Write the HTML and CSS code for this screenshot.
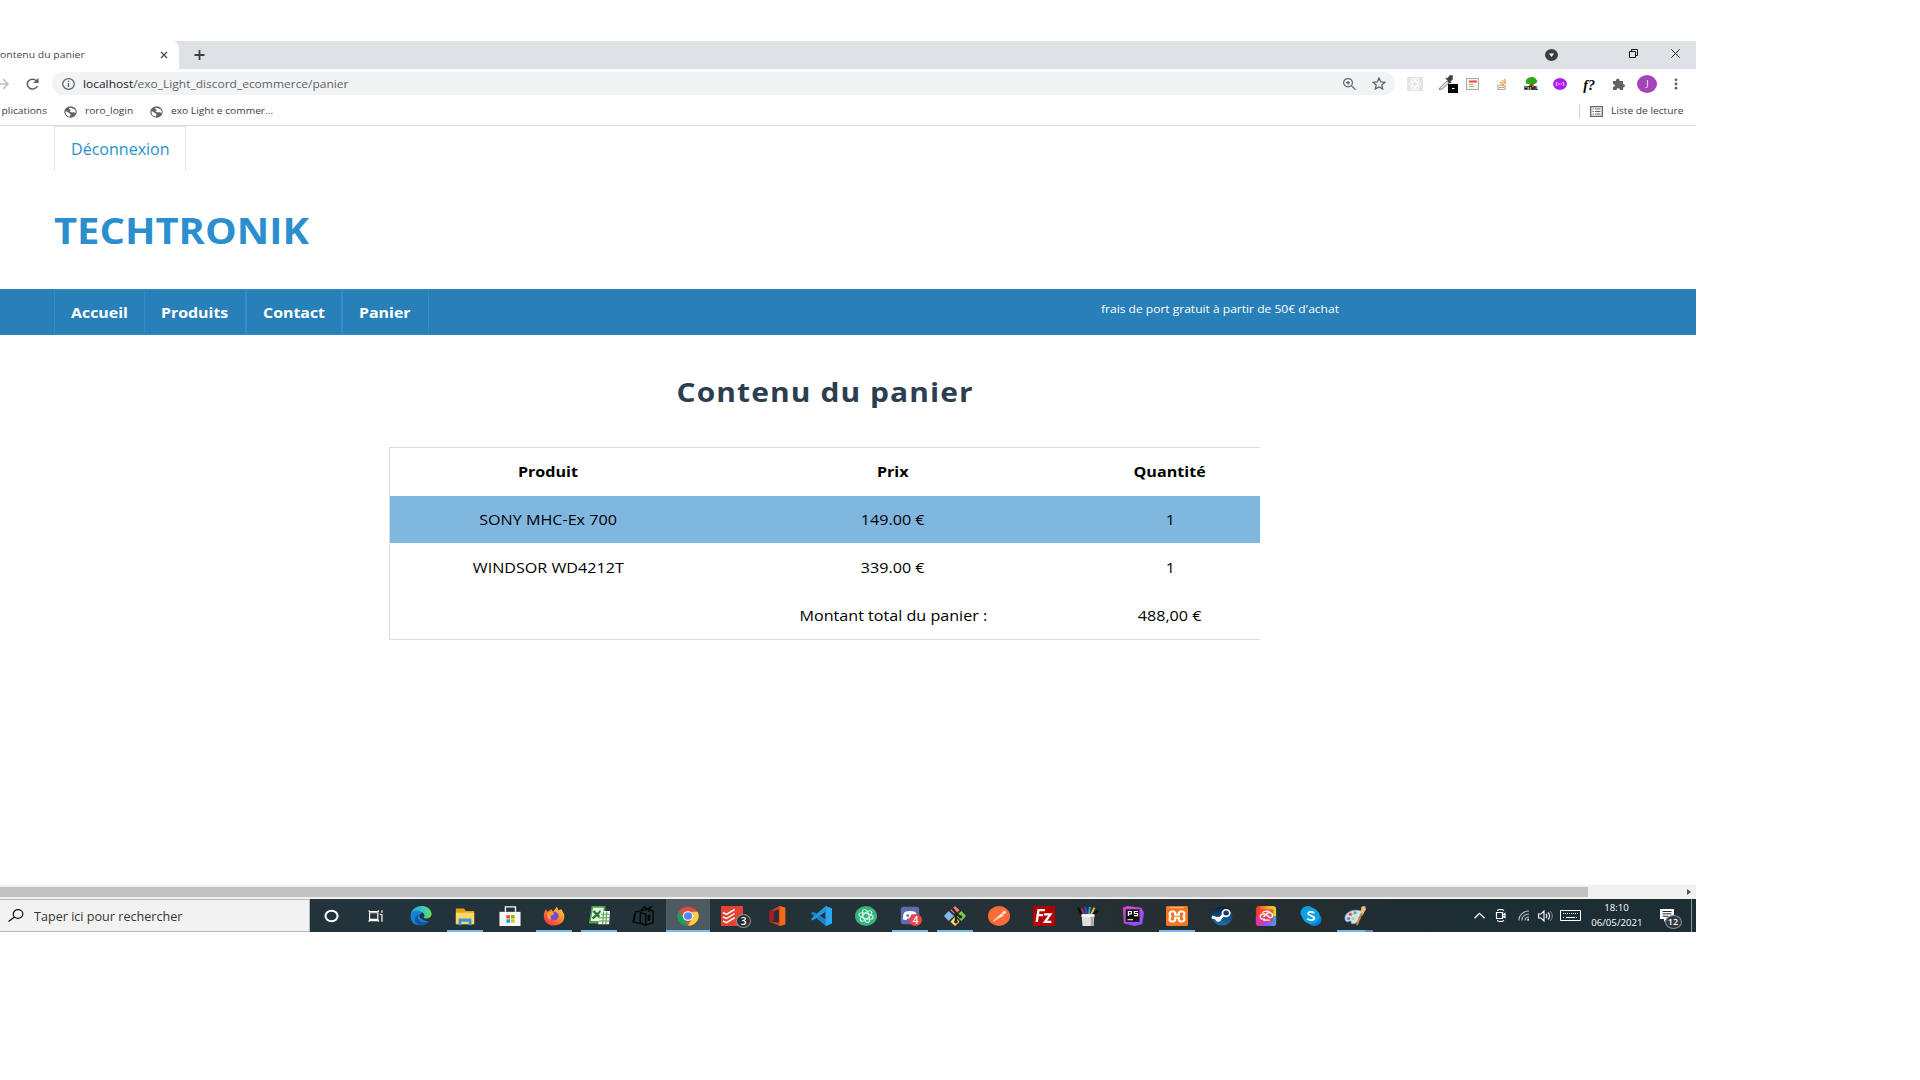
FILE: index.html
```html
<!DOCTYPE html>
<html lang="fr">
<head>
<meta charset="utf-8">
<title>Contenu du panier</title>
<link rel="stylesheet" href="styles.css">
</head>
<body>
<svg class="defs" width="0" height="0">
  <defs>
    <linearGradient id="edge" x1="0" y1="0" x2="1" y2="0"><stop offset="0" stop-color="#2aa6dc"/><stop offset=".6" stop-color="#37c8c0"/><stop offset="1" stop-color="#6be04a"/></linearGradient>
    <linearGradient id="fire" x1="1" y1="0" x2="0" y2="1"><stop offset="0" stop-color="#ffe040"/><stop offset=".5" stop-color="#ff7a28"/><stop offset="1" stop-color="#f0206c"/></linearGradient>
    <linearGradient id="cc" x1="0" y1="0" x2="1" y2="1"><stop offset="0" stop-color="#f03030"/><stop offset=".3" stop-color="#ff9a20"/><stop offset=".5" stop-color="#f040a0"/><stop offset=".75" stop-color="#5a70f0"/><stop offset="1" stop-color="#30d070"/></linearGradient>
    <linearGradient id="ccTop" x1="0" y1="0" x2="1" y2="0"><stop offset="0" stop-color="#f02a2a"/><stop offset=".5" stop-color="#ff9a20"/><stop offset="1" stop-color="#d8e02a"/></linearGradient>
    <linearGradient id="ccLow" x1="0" y1="0" x2="1" y2="0"><stop offset="0" stop-color="#f0309a"/><stop offset=".5" stop-color="#9a50f0"/><stop offset="1" stop-color="#30a8f0"/></linearGradient>
    <linearGradient id="ps" x1="0" y1="0" x2="1" y2="1"><stop offset="0" stop-color="#e548c8"/><stop offset="1" stop-color="#7c50ff"/></linearGradient>
    <linearGradient id="steam" x1="0" y1="0" x2="0" y2="1"><stop offset="0" stop-color="#0f1c3c"/><stop offset="1" stop-color="#1775b0"/></linearGradient>
    <symbol id="globe" viewBox="0 0 24 24" preserveAspectRatio="none"><circle cx="12" cy="12" r="11.500" fill="#5f6368"/><path d="M3 10l5 3 4 3-1 5C5 21 2 16 3 10zM11 3l-2 3 4 2-3 3 5 2 4-1 1 3 2-3-2-5-4-2z" fill="#fff"/></symbol>
  </defs>
</svg>
<div class="screen">
  <header class="chrome">
    <div class="tabstrip">
      <div class="tab"><span class="t tab-title">ontenu du panier</span>
        <svg class="tab-close" viewBox="0 0 8 8"><path d="M1 1l6 6M7 1l-6 6" stroke="#45494d" stroke-width="1.300"/></svg></div>
      <svg class="tab-new" viewBox="0 0 10 10"><path d="M5 0v10M0 5h10" stroke="#3c4043" stroke-width="1.800"/></svg>
      <svg class="win-more" viewBox="0 0 13 12"><ellipse cx="6.500" cy="6" rx="6.500" ry="6" fill="#3c4043"/><path d="M4 4.500h5L6.500 8z" fill="#fff"/></svg>
      <svg class="win-restore" viewBox="0 0 9 9"><path d="M.5 2.500h6v6h-6zM2.500 2.500v-2h6v6h-2" fill="none" stroke="#111"/></svg>
      <svg class="win-close" viewBox="0 0 9 9"><path d="M.3.3l8.400 8.400M8.700.3L.3 8.700" stroke="#222" stroke-width="1"/></svg>
    </div>
    <div class="toolbar">
      <svg class="forward" viewBox="0 0 10 12"><path d="M0 6h8M3 1l5 5-5 5" fill="none" stroke="#bcbec1" stroke-width="1.600"/></svg>
      <svg class="reload" viewBox="0 0 13 12"><path d="M11 3.400A5.300 4.900 0 1 0 11.500 8" fill="none" stroke="#5f6368" stroke-width="1.600"/><path d="M12.600 0v5H7.200z" fill="#5f6368"/></svg>
      <div class="omnibox">
        <svg class="info" viewBox="0 0 13 12"><ellipse cx="6.500" cy="6" rx="5.800" ry="5.300" fill="none" stroke="#5f6368" stroke-width="1.300"/><path d="M6.500 5v4M6.500 2.700v1.400" stroke="#5f6368" stroke-width="1.400"/></svg>
        <span class="t url"><b>localhost</b>/exo_Light_discord_ecommerce/panier</span>
        <svg class="zoomer" viewBox="0 0 13 12"><ellipse cx="5" cy="4.700" rx="4.400" ry="4.100" fill="none" stroke="#5f6368" stroke-width="1.200"/><path d="M8.300 7.600l4.200 4M3 4.700h4M5 2.900v3.600" stroke="#5f6368" stroke-width="1.300"/></svg>
        <svg class="star" viewBox="0 0 14 13"><path d="M7 1l1.700 3.800 4.300.4-3.200 2.700.9 4.100L7 9.900 3.300 12l.9-4.100L1 5.200l4.300-.4z" fill="none" stroke="#5f6368" stroke-width="1.300"/></svg>
      </div>
      <div class="extensions">
        <div><svg viewBox="0 0 16 14" width="16" height="14"><path d="M0 0h16v14H0z" fill="#e4e4e4"/><g fill="none" stroke="#fff"><ellipse cx="8" cy="7" rx="6" ry="2.300"/><ellipse cx="8" cy="7" rx="6" ry="2.300" transform="rotate(60 8 7)"/><ellipse cx="8" cy="7" rx="6" ry="2.300" transform="rotate(120 8 7)"/></g></svg></div>
        <div class="dropper"><svg viewBox="0 0 20 18" width="20" height="18"><path d="M2 12.500L9 6l2 2-7 6-3 .5z" fill="#ddd" stroke="#888"/><path d="M8 3l5 5M10 4l2-3h2v3l-3 3z" fill="#444" stroke="#444" stroke-width="1.600"/><path d="M10 9h10v9H10z"/><path d="M14 13.500h2.500" stroke="#fff"/></svg></div>
        <div><svg viewBox="0 0 13 12" width="13" height="12"><path d="M.5.5h12v11H.5z" fill="#f4f4f4" stroke="#aaa"/><path d="M3 2.500h8v2H3z" fill="#f44"/><path d="M3 6.500h4M3 8.500h5" stroke="#8c6"/></svg></div>
        <div><svg viewBox="0 0 10 12" width="10" height="12"><path d="M1 7v4.500h7V7M2 9.500h5" fill="none" stroke="#aaa" stroke-width="1.200"/><path d="M2 6.500l5 1.500M3 4l4 3M5 2l3 4M7.500 1l1 4" stroke="#f19a42" stroke-width="1.200"/></svg></div>
        <div><svg viewBox="0 0 14 13" width="14" height="13"><path d="M6 5h3l1 5H5z" fill="#984b16"/><path d="M3 7a3 3 0 0 1 0-5c1-2 7-3 9 0 2 2 1 4-1 5z" fill="#32a61c"/><path d="M0 9h14v4H0z" fill="#ddd"/><text x="0" y="12.900" class="ext-html" textLength="14">HTML</text></svg></div>
        <div><svg viewBox="0 0 13 12" width="14" height="12" preserveAspectRatio="none"><ellipse cx="6.500" cy="6" rx="6.500" ry="6" fill="#ad1eef"/><path d="M4 4L2.500 6 4 8M9 4l1.500 2L9 8M4.500 6h4" fill="none" stroke="#f0c4ff" stroke-dasharray="2 .6"/></svg></div>
        <div><span class="ext-f">f?</span></div>
        <div><svg viewBox="0 0 13 12" width="13" height="12"><path d="M1 3h3c-.4-3 4-3 3.600 0H11v3c2.500 0 2.500 3.500 0 3.500V12H8c0-2.500-3.500-2.500-3.500 0H1V9c2.500 0 2.500-3 0-3z" fill="#5f6368"/></svg></div>
        <div><span class="avatar">J</span></div>
        <div><svg viewBox="0 0 4 12" width="4" height="12" fill="#5f6368"><circle cx="2" cy="1.800" r="1.400"/><circle cx="2" cy="6" r="1.400"/><circle cx="2" cy="10.200" r="1.400"/></svg></div>
      </div>
    </div>
    <div class="bookmarks">
      <span class="t bm bm-apps">plications</span>
      <svg class="bm-globe g1"><use href="#globe"/></svg>
      <span class="t bm bm-roro">roro_login</span>
      <svg class="bm-globe g2"><use href="#globe"/></svg>
      <span class="t bm bm-exo">exo Light e commer...</span>
      <div class="reading">
        <svg viewBox="0 0 13 11" width="13" height="11"><path d="M.7.7h11.600v9.600H.7z" fill="#fff" stroke="#5f6368" stroke-width="1.300"/><path d="M2.500 3h1.400M2.500 5.500h1.400M2.500 8h1.400M5 3h5.500M5 5.500h5.500M5 8h5.500" stroke="#5f6368" stroke-width="1.200"/></svg>
        <span class="t bm">Liste de lecture</span>
      </div>
    </div>
  </header>

  <main class="page">
    <a class="logout"><span class="t logout-text">Déconnexion</span></a>
    <div class="brand"><span class="t brand-text">TECHTRONIK</span></div>
    <nav class="nav">
      <a class="n1"><span class="t nav-text">Accueil</span></a>
      <a class="n2"><span class="t nav-text">Produits</span></a>
      <a class="n3"><span class="t nav-text">Contact</span></a>
      <a class="n4"><span class="t nav-text">Panier</span></a>
      <span class="t shipping">frais de port gratuit à partir de 50€ d'achat</span>
    </nav>
    <h1><span class="t h1-text">Contenu du panier</span></h1>
    <div class="cart">
      <div class="row head"><span class="t">Produit</span><span class="t">Prix</span><span class="t">Quantité</span></div>
      <div class="row stripe"><span class="t">SONY MHC-Ex 700</span><span class="t">149.00 €</span><span class="t">1</span></div>
      <div class="row"><span class="t">WINDSOR WD4212T</span><span class="t">339.00 €</span><span class="t">1</span></div>
      <div class="row"><span></span><span class="t">Montant total du panier :</span><span class="t">488,00 €</span></div>
    </div>
  </main>

  <div class="scrollbar"><div class="thumb"></div><svg viewBox="0 0 4 6" width="4" height="6"><path d="M0 0l4 3-4 3z" fill="#505050"/></svg></div>

  <footer class="taskbar">
    <div class="search">
      <svg viewBox="0 0 16 13" width="16" height="13"><ellipse cx="10" cy="5" rx="4.800" ry="4.300" fill="none" stroke="#111" stroke-width="1.200"/><path d="M6.500 8L.5 12.500" stroke="#111" stroke-width="1.300"/></svg>
      <span class="t search-text">Taper ici pour rechercher</span>
    </div>
    <div class="apps">
      <div class="app"><svg viewBox="0 0 24 24" preserveAspectRatio="none"><ellipse cx="11.500" cy="12" rx="6.600" ry="6.300" fill="none" stroke="#fff" stroke-width="2.200"/></svg></div>
      <div class="app"><svg viewBox="0 0 24 24" preserveAspectRatio="none"><path d="M5 8h9v8H5zM4.500 5v1.500h10V5M4.500 19v-1.500h10V19M18.500 5v3M18.500 10v9M16 10h2" fill="none" stroke="#fff" stroke-width="1.300"/></svg></div>
      <div class="app"><svg viewBox="0 0 24 24" preserveAspectRatio="none"><path d="M1 10C3-3 22-3 23.500 9c.5 6-6 7-9 5 3-3 0-7-4-7C5 7 2 10 1 10z" fill="url(#edge)"/><path d="M.5 11C3 4 12 4 13.500 9c-5 0-5 8 7 9.500C14 26 0 25 .5 11z" fill="#1583d4"/><path d="M10 10c-4 5 1 12 10.500 8.500-3 5-11 6.500-14 2C4 17 6 11 10 10z" fill="#1156a6"/></svg></div>
      <div class="app open"><svg viewBox="0 0 24 24" preserveAspectRatio="none"><path d="M2 3h9l2 3h9v15H2z" fill="#e5a312"/><path d="M2 8h20v14H2z" fill="#ffd766"/><path d="M5 23v-8h14v8h-3v-4H8v4z" fill="#3c97d9"/></svg></div>
      <div class="app"><svg viewBox="0 0 24 24" preserveAspectRatio="none"><path d="M7 7V1h11v6" fill="none" stroke="#fff" stroke-width="1.500"/><path d="M.5 7h23v17H.5z" fill="#f7f7f7"/><path d="M8 11h4v4H8z" fill="#f25022"/><path d="M13 11h4v4h-4z" fill="#7fba00"/><path d="M8 16h4v4H8z" fill="#00a4ef"/><path d="M13 16h4v4h-4z" fill="#ffb900"/></svg></div>
      <div class="app open"><svg viewBox="0 0 24 24" preserveAspectRatio="none"><path d="M1 9l2-5 2 3 4-3 2 3 4-6 2 4 3-1 3 6c3 17-23 18-22 2z" fill="url(#fire)"/><circle cx="12" cy="12" r="5" fill="#7649d8"/><path d="M5 8l6-1 1 3-4 2 1 4c-4 0-5-5-4-8z" fill="#ffa52c"/></svg></div>
      <div class="app open"><svg viewBox="0 0 24 24" preserveAspectRatio="none"><path d="M4 0h15l-1 21H1z" fill="#4aa153"/><path d="M5.500 2H17l-1 16H3z" fill="#e8f5df"/><path d="M6 6l8 9M14 6l-9 9" stroke="#277437" stroke-width="2.800"/><path d="M14 6h10l-1 16H11z" fill="#f1f6ee"/><path d="M14 10h9M13 14h10M12 18h11M17 7l-1 15M20.500 7l-1 15" stroke="#57a451" stroke-width="1.200"/></svg></div>
      <div class="app"><svg viewBox="0 0 24 24" preserveAspectRatio="none"><path d="M4 7l13-3 6 2v14l-8 3-13-4zM9 8v12l6 3V10zM3 9L1 20M10 5l4-4 2 3 5-3-3 6" fill="none" stroke="#05090a" stroke-width="1.600"/><path d="M17 11l3-1v7l-3 1z" fill="#05090a"/></svg></div>
      <div class="app active"><svg viewBox="0 0 24 24" preserveAspectRatio="none"><circle cx="12" cy="12" r="11.500" fill="#dd4b3e"/><path d="M2 6l6 10 4 8C2 24-2 14 2 6z" fill="#1aa15f"/><path d="M12 23.500L17 14l-.5-7h6c4 8-3 17-10.500 16.500z" fill="#ffce43"/><circle cx="12" cy="12" r="5.800" fill="#fff"/><circle cx="12" cy="12" r="4.500" fill="#4c8bf5"/></svg></div>
      <div class="app badge3"><svg viewBox="0 0 24 24" preserveAspectRatio="none"><path d="M0 0h24v24H0z" fill="#e44232"/><path d="M2 8l4 2 9-6M2 13l4 2 9-6M2 18l4 2 9-6" fill="none" stroke="#fff" stroke-width="1.800"/></svg><i>3</i></div>
      <div class="app"><svg viewBox="0 0 24 24" preserveAspectRatio="none"><path d="M4 6l11-6 6 2v20l-6 2-11-5 10 1V4L8 6v12l-4 1z" fill="#e2401b"/><path d="M15 0l6 2v20l-6 2z" fill="#f56a16"/><path d="M4 6l4-2v14l-4 1z" fill="#b01828"/></svg></div>
      <div class="app"><svg viewBox="0 0 24 24" preserveAspectRatio="none"><path d="M17 0l7 3v18l-7 3L1 9l2-2 3 1 11 8z" fill="#1b80c8"/><path d="M17 0v7L3 17.500l-2-2z" fill="#2499e0"/><path d="M17 0l7 3v18l-7 3z" fill="#2ba8f2"/></svg></div>
      <div class="app"><svg viewBox="0 0 24 24" preserveAspectRatio="none"><circle cx="12" cy="12" r="12" fill="#37b37e"/><g fill="none" stroke="#c9f5df" stroke-width="1.400"><ellipse cx="12" cy="12" rx="8" ry="3.200" transform="rotate(15 12 12)"/><ellipse cx="12" cy="12" rx="8" ry="3.200" transform="rotate(75 12 12)"/><ellipse cx="12" cy="12" rx="8" ry="3.200" transform="rotate(135 12 12)"/></g></svg></div>
      <div class="app open badge4"><svg viewBox="0 0 24 24" preserveAspectRatio="none"><rect x="2" y="1" width="20" height="21" rx="3" fill="#5b6dae"/><path d="M5 9c1-4 13-4 14 0l1 7-4 1-1-2H9l-1 2-4-1z" fill="#fff"/><circle cx="9.500" cy="11.500" r="1.500" fill="#5b6dae"/><circle cx="14.500" cy="11.500" r="1.500" fill="#5b6dae"/></svg><i>4</i></div>
      <div class="app open"><svg viewBox="0 0 24 24" preserveAspectRatio="none"><path d="M12 0l5 5-5 5-5-5z" fill="#ef7f78"/><path d="M5 6l6 6-6 6-5-6z" fill="#81b8f0"/><path d="M19 6l5 6-5 6-6-6z" fill="#78ca50"/><path d="M12 13l5 6-5 5-5-5z" fill="#ffe062"/><path d="M9 3l4 5v11M12 8l6 5" fill="none" stroke="#28221e" stroke-width="2.500"/><circle cx="13" cy="19" r="2" fill="#28221e"/><circle cx="18" cy="13" r="2" fill="#28221e"/></svg></div>
      <div class="app"><svg viewBox="0 0 24 24" preserveAspectRatio="none"><circle cx="12" cy="12" r="12" fill="#ff6c37"/><path d="M6 18l9-9 2 2z" fill="#ffe4d8" stroke="#ffe4d8"/><path d="M16 8l2-2 1.500 1.500-2 2z" fill="#fff" stroke="#fff"/></svg></div>
      <div class="app"><svg viewBox="0 0 24 24" preserveAspectRatio="none"><path d="M0 0h24v24H0z" fill="#b30000"/><path d="M4 19L6 5h7M5 11h6M12 10h7l-6 9h7" fill="none" stroke="#fff" stroke-width="2.600"/></svg></div>
      <div class="app"><svg viewBox="0 0 24 24" preserveAspectRatio="none"><path d="M6 11L1 2" stroke="#111" stroke-width="3"/><path d="M8 11L5 3" stroke="#d92d3b" stroke-width="2"/><path d="M11 11L9 1" stroke="#2350d8" stroke-width="2.500"/><path d="M13 11l1-10" stroke="#29b5c5" stroke-width="2"/><path d="M15 11l4-9" stroke="#e5c83f" stroke-width="2"/><path d="M17 11l6-6" stroke="#111" stroke-width="2.500"/><path d="M5 10h14l-1 14H6z" fill="#dedede"/><path d="M5 10h14v3H5z" fill="#f8f8f8"/><path d="M15 13h3v11h-3z" fill="#aaa"/></svg></div>
      <div class="app"><svg viewBox="0 0 24 24" preserveAspectRatio="none"><path d="M1 2l5-2 15 2 3 6-2 14-8 2-12-3z" fill="url(#ps)"/><path d="M4 4h15v15H4z" fill="#101010"/><path d="M7 12V6.500h3.200v3H7M17.500 6.500h-4V9h3.500v2.500h-4M6 16.500h6" fill="none" stroke="#fff" stroke-width="1.300"/></svg></div>
      <div class="app open"><svg viewBox="0 0 24 24" preserveAspectRatio="none"><rect width="24" height="24" rx="1.500" fill="#f37623"/><path d="M4 2h16" stroke="#ffbe8d" stroke-width="1.200"/><path d="M6 6.500h2.500L10 8v2.500h4V8l1.500-1.500H18L20 8v3l-1 1.500 1 1.500v3l-2 1.500h-2.500L14 17v-3h-4v3l-1.500 1.500H6L4 17v-3l1-1.500L4 11V8z" fill="none" stroke="#fff" stroke-width="2.300"/></svg></div>
      <div class="app"><svg viewBox="0 0 24 24" preserveAspectRatio="none"><circle cx="12" cy="12" r="11.500" fill="url(#steam)"/><path d="M1 13l8 3 5-6" fill="none" stroke="#fff" stroke-width="3.500"/><circle cx="8" cy="16" r="3" fill="#fff"/><circle cx="16.500" cy="8.500" r="4" fill="#173a66" stroke="#fff" stroke-width="2"/></svg></div>
      <div class="app"><svg viewBox="0 0 24 24" preserveAspectRatio="none"><rect x="1" width="22" height="24" rx="4" fill="url(#ccTop)"/><path d="M1 12h22v8a4 4 0 0 1-4 4H5a4 4 0 0 1-4-4z" fill="url(#ccLow)"/><path d="M4 4h16v15H4z" fill="#ee3f4e" opacity=".8"/><path d="M11 16c-7 1-7-7-1-6.500 5 .5 4 5 7 4.500 4-1 2-7-2-6-4 1-4 5-6 5M8 8c3-3 8-2 8 0M16 17H9" fill="none" stroke="#fff" stroke-width="1.500"/></svg></div>
      <div class="app"><svg viewBox="0 0 24 24" preserveAspectRatio="none"><circle cx="8.500" cy="8" r="8" fill="#0c9fe2"/><circle cx="15.500" cy="16" r="8" fill="#0a80d0"/><circle cx="12" cy="12" r="9.500" fill="#0ca4e6"/><path d="M15.500 8.500C13 6 8.500 7 9 9.500s6.500 2 6.500 5-5 3.500-7.500.5" fill="none" stroke="#fff" stroke-width="2.200"/></svg></div>
      <div class="app open double"><svg viewBox="0 0 24 24" preserveAspectRatio="none"><path d="M1 14C2 4 18 3 21 8c1 4-5 3-5 7 0 5-5 7-8 6 1-3-2-4-4-2-2 0-3-2-3-5z" fill="#cfe2f0" stroke="#84a9c4"/><circle cx="7" cy="10" r="2" fill="#e55"/><circle cx="12" cy="8" r="1.800" fill="#4bc35a"/><circle cx="5" cy="15" r="1.800" fill="#4b8be8"/><circle cx="10" cy="15" r="1.800" fill="#efc63e"/><path d="M14 23l6-16" stroke="#c78436" stroke-width="2"/><path d="M18 8l1-7 4-1 1 4-3 5z" fill="#e9bd82"/></svg></div>
    </div>
    <div class="tray">
      <svg class="chev" viewBox="0 0 11 7"><path d="M.5 6.300l5-5 5 5" fill="none" stroke="#fff" stroke-width="1.300"/></svg>
      <svg class="meet" viewBox="0 0 11 13"><path d="M1.500 3.500h6v6h-6zM7.500 6l2.500-1.500v4L7.500 7M2 1.500C4 .3 7 .3 9 1.500M2 11.500c2 1.200 5 1.200 7 0" fill="none" stroke="#fff" stroke-width="1.200"/></svg>
      <svg class="wifi" viewBox="0 0 12 11"><path d="M1 10.500A10 9 0 0 1 11 1M4 10.500A7 6 0 0 1 11 4M7 10.500a4 4 0 0 1 4-3.500" fill="none" stroke="#b9c0c3" stroke-width="1.100"/><path d="M9 10.500a2 2 0 0 1 2-2v2z" fill="#fff"/></svg>
      <svg class="vol" viewBox="0 0 15 12"><path d="M.6 4h2.400l3-3v10L3 8H.6z" fill="none" stroke="#fff" stroke-width="1.100"/><path d="M8 4c1 1 1 3 0 4M10 2.500c2 2 2 5 0 7" fill="none" stroke="#fff" stroke-width="1.200"/><path d="M12 1c3 3 3 7 0 10" fill="none" stroke="#8b9599"/></svg>
      <svg class="kbd" viewBox="0 0 21 11"><path d="M.5.500h20v10H.5z" fill="none" stroke="#fff"/><path d="M3 3.500h15M3 7.500h2M16 7.500h2" stroke="#fff" stroke-dasharray="1 1"/><path d="M6 7.500h9" stroke="#fff"/></svg>
      <div class="clock"><span class="t">18:10</span><span class="t">06/05/2021</span></div>
      <div class="notif"><svg viewBox="0 0 14 13" width="14" height="13"><path d="M0 0h14v10H7l-3 3v-3H0z" fill="#fff"/><path d="M2.500 2.500h9M2.500 4.800h9M2.500 7.200h6" stroke="#22323a"/></svg><i>12</i></div>
      <div class="peek"></div>
    </div>
  </footer>
</div>
</body>
</html>
```
FILE: styles.css
```css
* { box-sizing: border-box; }
body { margin: 0; background: #fff; font-family: "Open Sans", "Noto Sans", sans-serif; width: 1920px; height: 1080px; overflow: hidden; }
.defs { display: block; height: 0; }
svg { display: block; flex: none; }
.screen { margin-top: 41px; width: 1696px; height: 891px; display: flex; flex-direction: column; overflow: hidden; }
.t { display: inline-block; white-space: nowrap; flex: none; transform: scaleX(1.074); transform-origin: 0 50%; }

/* Browser window */
.chrome { height: 85px; border-bottom: 1px solid #dadce0; flex: none; }
.tabstrip { height: 28px; background: #dee1e6; display: flex; align-items: center; }
.tab { width: 179px; height: 28px; background: #fff; border-radius: 0 7px 0 0; display: flex; align-items: center; }
.tab-title { width: 160px; font-size: 9.500px; color: #45494d; transform: scaleX(1.1); padding-bottom: 1px; }
.tab-close { width: 8px; height: 8px; }
.tab-new { width: 11px; height: 10px; margin-left: 15px; }
.win-more { width: 13px; height: 12px; margin-left: 1340px; }
.win-restore { width: 9px; height: 9px; margin: -4px 0 0 71px; }
.win-close { width: 9px; height: 9px; margin: -4px 0 0 33px; }
.toolbar { height: 29px; display: flex; align-items: center; }
.forward { width: 10px; height: 12px; }
.reload { width: 13px; height: 12px; margin-left: 16px; }
.omnibox { width: 1343px; height: 23px; margin-left: 13px; border-radius: 12px; background: #f1f3f4; display: flex; align-items: center; }
.info { width: 13px; height: 12px; margin-left: 10px; }
.url { width: 1250px; margin-left: 8px; font-size: 11px; color: #5f6368; transform: scaleX(1.089); }
.url b { font-weight: 400; color: #202124; }
.zoomer { width: 13px; height: 12px; margin-left: 10px; }
.star { width: 14px; height: 13px; margin-left: 16px; }
.extensions { width: 291px; height: 29px; margin-left: 5px; display: grid; grid-template-columns: repeat(10, 1fr); align-items: center; justify-items: center; }
.dropper { padding-left: 8px; }
.ext-html { font: 900 5px "Open Sans", sans-serif; }
.ext-f { font: italic bold 14px/16px "Liberation Serif", serif; color: #000; }
.avatar { display: block; width: 20px; height: 18px; border-radius: 50%; background: #a743b9; color: #fff; font-size: 8.500px; line-height: 18px; text-align: center; }
.bookmarks { height: 27px; display: flex; align-items: center; }
.bm { font-size: 9.500px; color: #3c4043; padding-bottom: 2px; }
.bm-apps { width: 47px; text-align: right; transform-origin: 100% 50%; }
.bm-globe { width: 13px; height: 12px; }
.g1 { margin-left: 17px; }
.bm-roro { margin-left: 8px; width: 65px; }
.bm-exo { margin-left: 8px; }
.reading { margin-left: auto; width: 117px; height: 13px; border-left: 1px solid #cfd1d4; padding-left: 10px; display: flex; align-items: center; gap: 8px; }

/* Shop page */
.page { height: 759px; flex: none; }
.logout { display: flex; width: 132px; height: 45px; margin-left: 54px; padding-left: 16px; border: 1px solid #e5e5e5; border-bottom: 0; align-items: center; }
.logout-text { font-size: 15.500px; color: #2b8fcf; transform: scaleX(1.035); }
.brand { height: 118px; padding: 34px 0 0 54px; }
.brand-text { font-size: 36.500px; line-height: 50px; font-weight: 700; color: #2b8fcf; transform: scaleX(1.094); }
.nav { height: 46px; background: #2980b9; padding-left: 54px; display: flex; }
.nav a { border: 1px solid #2b8fcf; padding-left: 16px; line-height: 45px; }
.nav a.n1 { width: 90px; border-right: 0; }
.nav a.n2 { width: 102px; }
.n3 { width: 96px; }
.n4 { width: 87px; }
.nav-text { font-size: 15px; font-weight: 700; color: #fff; transform: scaleX(1.06); }
.shipping { margin-left: 672px; font-size: 10.500px; line-height: 41px; color: #fff; transform: scaleX(1.146); }
h1 { margin: 0; height: 112px; padding-top: 37px; font-size: 27px; line-height: 40px; color: #2c3e50; text-align: center; width: 1651px; }
.h1-text { letter-spacing: 1px; }
.h1-text, .row .t, .clock .t { transform-origin: 50% 50%; }
.h1-text { transform: scaleX(1.108); }
.cart { width: 871px; height: 193px; margin-left: 389px; border: 1px solid #dcdcdc; border-right: 0; }
.row { display: grid; grid-template-columns: 316px 374px 180px; height: 48px; line-height: 48px; justify-items: center; font-size: 15px; color: #000; }
.row.head { font-weight: 700; line-height: 47px; }
.row.stripe { background: #80b7df; height: 47px; line-height: 47px; }

/* Horizontal scrollbar */
.scrollbar { height: 14px; background: #f0f0f0; display: flex; align-items: center; flex: none; }
.thumb { width: 1588px; height: 10px; background: #c1c1c1; margin-right: 99px; }

/* Taskbar */
.taskbar { height: 33px; flex: none; display: flex; background: linear-gradient(90deg, #22343d 0, #243238 50%, #262e30 75%, #1d2d34 86%, #1c2d34 100%); }
.search { width: 309.500px; background: #f2f2f2; border: 1px solid #b9b9b9; border-left: 0; display: flex; align-items: center; padding-left: 8px; gap: 10px; }
.search-text { font-size: 12px; color: #333; transform: scaleX(1.05); padding-top: 1px; }
.apps { display: flex; }
.app { width: 44.500px; height: 33px; display: flex; align-items: center; justify-content: center; position: relative; }
.app svg { width: 22px; height: 20px; }
.app.open::after { content: ""; position: absolute; left: 4px; bottom: 0; width: 36px; height: 2px; background: #76b9ed; }
.app.active { background: #4e5a60; border-bottom: 2px solid #76b9ed; padding-top: 2px; }
.app.double::after { width: 28px; border-right: 8px solid #5a8cb4; }
.app i { position: absolute; font-style: normal; font-weight: 600; color: #fff; text-align: center; border-radius: 50%; }
.badge3 i { width: 15px; height: 14px; left: 26px; top: 15px; background: #2b2f31; border: 1px solid #8a8f91; font-size: 10px; line-height: 12px; }
.badge4 i { width: 13px; height: 12px; left: 21px; top: 15px; background: #e8484c; font-size: 10px; line-height: 12px; }
.tray { flex: 1; display: flex; align-items: center; }
.chev { width: 11px; height: 7px; margin-left: 96px; }
.meet { width: 11px; height: 13px; margin-left: 10px; }
.wifi { width: 12px; height: 11px; margin-left: 12px; }
.vol { width: 15px; height: 12px; margin-left: 8px; }
.kbd { width: 21px; height: 11px; margin-left: 7px; }
.clock { width: 52px; margin-left: 10px; display: flex; flex-direction: column; align-items: center; font-size: 9px; line-height: 14.500px; color: #fff; }
.notif { position: relative; margin-left: 17px; }
.notif i { position: absolute; left: 5px; top: 6px; width: 17px; height: 14px; border-radius: 50%; background: #2f3a3f; border: 1px solid #8a8f91; font: 600 9px/12px "Open Sans", sans-serif; color: #fff; text-align: center; }
.peek { height: 33px; border-left: 1px solid #8c959a; width: 5px; margin-left: auto; }
```
